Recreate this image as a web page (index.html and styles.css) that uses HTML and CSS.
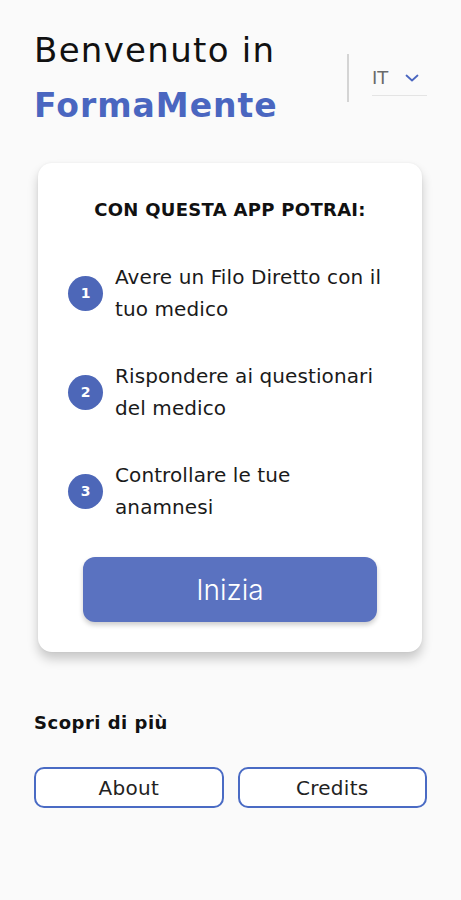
FILE: index.html
```html
<!DOCTYPE html>
<html lang="it">
<head>
    <meta charset="UTF-8">
    <meta name="viewport" content="width=device-width, initial-scale=1.0">
    <title>FormaMente</title>
    <link rel="stylesheet" href="styles.css">
</head>
<body>
    <div class="page">
        <header class="top">
            <h1 class="title">
                <span class="title-line">Benvenuto in</span>
                <span class="brand">FormaMente</span>
            </h1>
            <div class="lang">
                <div class="lang-select">
                    <span class="lang-code">IT</span>
                    <svg class="chevron" width="14" height="8" viewBox="0 0 14 8">
                        <path d="M1.5 1.5 L7 6.5 L12.5 1.5" fill="none" stroke="#4a66c0" stroke-width="1.8" stroke-linecap="round" stroke-linejoin="round"/>
                    </svg>
                </div>
            </div>
        </header>

        <section class="card">
            <h2 class="card-title">CON QUESTA APP POTRAI:</h2>
            <ol class="steps">
                <li class="step">
                    <span class="step-num">1</span>
                    <p class="step-text">Avere un Filo Diretto con il<br>tuo medico</p>
                </li>
                <li class="step">
                    <span class="step-num">2</span>
                    <p class="step-text">Rispondere ai questionari<br>del medico</p>
                </li>
                <li class="step">
                    <span class="step-num">3</span>
                    <p class="step-text">Controllare le tue<br>anamnesi</p>
                </li>
            </ol>
            <button type="button" class="start">Inizia</button>
        </section>

        <h3 class="more-title">Scopri di più</h3>
        <div class="more-links">
            <button type="button" class="link-btn">About</button>
            <button type="button" class="link-btn">Credits</button>
        </div>
    </div>
</body>
</html>
```

FILE: styles.css
```css
body {
    font-family: "DejaVu Sans", Inter, sans-serif;
    background-color: #fafafa;
    color: #1a1a1a;
    margin: 0;
    padding: 0;
}

.page {
    padding: 23px 34px 40px 34px;
}

.top {
    display: flex;
    justify-content: space-between;
    align-items: flex-start;
}

.title {
    margin: 0;
    display: flex;
    flex-direction: column;
    font-size: 34px;
    line-height: 55px;
    font-weight: 400;
    letter-spacing: 1.3px;
    color: #111;
}

.brand {
    font-size: 33px;
    font-weight: 700;
    letter-spacing: 1px;
    color: #4a66c0;
}

.lang {
    display: flex;
    margin-top: 31px;
    height: 48px;
}

.lang::before {
    content: "";
    width: 2px;
    background-color: #d4d4d4;
    margin-right: 23px;
}

.lang-select {
    box-sizing: border-box;
    display: flex;
    align-items: center;
    justify-content: space-between;
    width: 55px;
    height: 42px;
    padding: 6px 8px 0 0;
    border-bottom: 1px solid #e4e4e4;
}

.lang-code {
    font-size: 18px;
    color: #6a6a6a;
}

.card {
    margin: 30px 5px 0 4px;
    background-color: #fff;
    border-radius: 14px;
    box-shadow: 0 7px 11px rgba(0, 0, 0, 0.2), 0 0 3px rgba(0, 0, 0, 0.05);
    padding: 36px 20px 30px 30px;
}

.card-title {
    margin: 0;
    text-align: center;
    font-size: 18px;
    font-weight: 700;
    letter-spacing: 0.3px;
    color: #111;
    padding-right: 10px;
}

.steps {
    list-style: none;
    margin: 41px 0 0 0;
    padding: 0;
    display: flex;
    flex-direction: column;
    gap: 35px;
}

.step {
    display: flex;
    align-items: center;
    gap: 12px;
}

.step-num {
    flex: none;
    width: 35px;
    height: 35px;
    border-radius: 50%;
    background-color: #4d67b8;
    color: #fff;
    font-size: 14px;
    font-weight: 700;
    display: flex;
    align-items: center;
    justify-content: center;
}

.step-text {
    margin: 0;
    font-size: 20px;
    line-height: 32px;
    letter-spacing: 0.1px;
    color: #1a1a1a;
}

.start {
    display: block;
    width: 294px;
    height: 65px;
    margin: 34px 0 0 15px;
    border: none;
    border-radius: 12px;
    background-color: #5a72c0;
    color: #fff;
    font-family: Inter, sans-serif;
    font-size: 28px;
    font-weight: 300;
    box-shadow: 0 3px 5px rgba(0, 0, 0, 0.2);
}

.more-title {
    margin: 60px 0 0 0;
    font-size: 18px;
    font-weight: 700;
    letter-spacing: 0.5px;
    color: #111;
}

.more-links {
    display: grid;
    grid-template-columns: 1fr 1fr;
    gap: 14px;
    margin-top: 34px;
}

.link-btn {
    height: 41px;
    border: 2px solid #4a6bc4;
    border-radius: 10px;
    background-color: #fff;
    font-family: inherit;
    font-size: 20px;
    letter-spacing: 0.3px;
    color: #222;
}
```
